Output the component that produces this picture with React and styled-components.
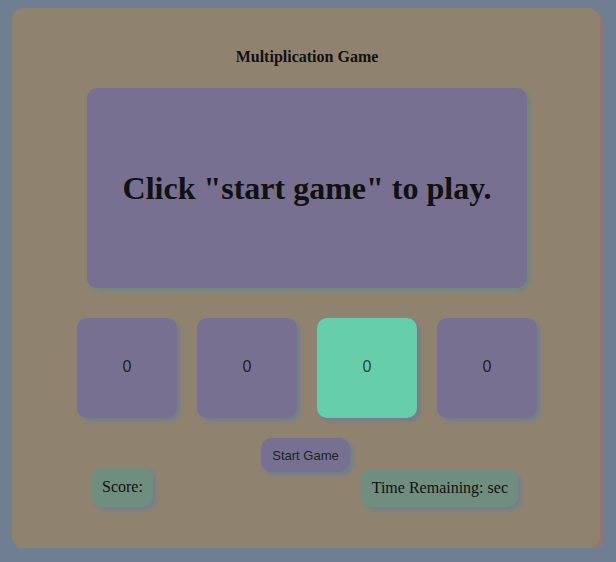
import React from 'react'
import styled, { createGlobalStyle } from 'styled-components'

const Global = createGlobalStyle`
body {
  margin: 0;
  background-color: #6f7f91;
  font-family: "Liberation Serif", "Times New Roman", serif;
}
`

const Container = styled.div`
  box-sizing: border-box;
  width: 588px;
  height: 540px;
  margin: 8px 0 0 12px;
  padding: 40px 0 0;
  background-color: #8f8370;
  border-radius: 12px;
  box-shadow: 3px 3px 3px #9a7474;
  display: flex;
  flex-direction: column;
  align-items: center;
`

const Title = styled.h1`
  margin: 0 0 0 2px;
  font-size: 16px;
  line-height: 18px;
  font-weight: 700;
  color: #111;
`

const Question = styled.div`
  box-sizing: border-box;
  width: 440px;
  height: 200px;
  margin: 22px 0 0 2px;
  display: flex;
  align-items: center;
  justify-content: center;
  background-color: #787090;
  border-radius: 10px;
  box-shadow: 3px 3px 4px #6f8584;
  font-size: 32px;
  font-weight: 700;
  color: #111;
`

const Choices = styled.div`
  display: flex;
  gap: 20px;
  margin: 30px 0 0 2px;
`

const Box = styled.div`
  box-sizing: border-box;
  width: 100px;
  height: 100px;
  padding-bottom: 3px;
  display: flex;
  align-items: center;
  justify-content: center;
  background-color: ${(props) => (props.$active ? '#66cdaa' : '#787090')};
  border-radius: 10px;
  box-shadow: 3px 3px 4px #6f7f91;
  font-family: "Liberation Sans", Arial, sans-serif;
  font-size: 16px;
  color: ${(props) => (props.$active ? '#1e4a3c' : '#222')};
`

const Controls = styled.div`
  box-sizing: border-box;
  width: 100%;
  height: 69px;
  margin-top: 20px;
  padding: 0 82px 0 80px;
  display: grid;
  grid-template-columns: 1fr auto 1fr;
`

const StartButton = styled.div`
  align-self: start;
  width: 89px;
  height: 34px;
  display: flex;
  align-items: center;
  justify-content: center;
  background-color: #787090;
  border-radius: 11px;
  box-shadow: 3px 3px 4px #6f7f91;
  font-family: "Liberation Sans", Arial, sans-serif;
  font-size: 13px;
  color: #222;
  margin-left: 1px;
`

const Info = styled.div`
  align-self: end;
  justify-self: ${(props) => props.$side};
  box-sizing: border-box;
  height: ${(props) => props.$h}px;
  padding: 0 10px;
  display: flex;
  align-items: center;
  background-color: #6f8e7e;
  border-radius: 10px;
  box-shadow: 3px 3px 4px #6f7f91;
  font-size: 16px;
  color: #111;
`

export default function App() {
  return (
    <>
      <Global />
      <Container>
        <Title>Multiplication Game</Title>
        <Question>Click "start game" to play.</Question>
        <Choices>
          <Box>0</Box>
          <Box>0</Box>
          <Box $active>0</Box>
          <Box>0</Box>
        </Choices>
        <Controls>
          <Info $side="start" $h={40}>Score:</Info>
          <StartButton>Start Game</StartButton>
          <Info $side="end" $h={38}>Time Remaining: sec</Info>
        </Controls>
      </Container>
    </>
  )
}
